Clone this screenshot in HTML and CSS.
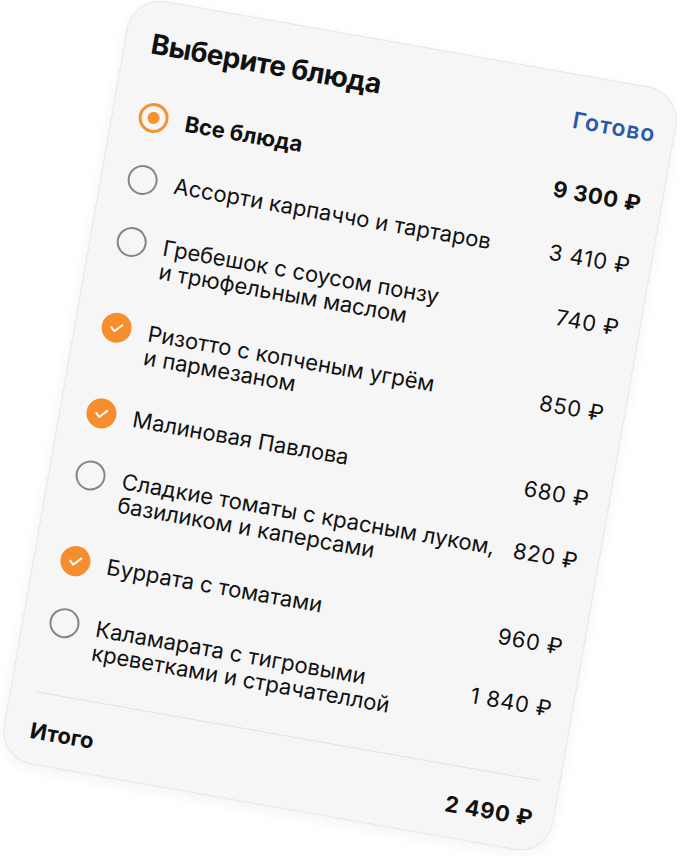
FILE: index.html
```html
<!DOCTYPE html>
<html lang="ru">
<head>
  <meta charset="UTF-8">
  <title>Выберите блюда</title>
  <link rel="stylesheet" href="styles.css">
</head>
<body>

<div class="card">
  <!-- Header -->
  <div class="card-head">
    <h1>Выберите блюда</h1>
    <span class="done">Готово</span>
  </div>

  <!-- Dish list -->
  <ul class="dishes">
    <li class="dish dish-all">
      <span class="mark radio-on"></span>
      <span class="name">Все блюда</span>
      <span class="price">9 300 ₽</span>
    </li>
    <li class="dish">
      <span class="mark"></span>
      <span class="name">Ассорти карпаччо и тартаров</span>
      <span class="price">3 410 ₽</span>
    </li>
    <li class="dish">
      <span class="mark"></span>
      <span class="name">Гребешок с соусом понзу<br>и трюфельным маслом</span>
      <span class="price">740 ₽</span>
    </li>
    <li class="dish">
      <span class="mark checked"><svg viewBox="0 0 24 24"><path d="M7.2 12.4l3.3 3.2 6.3-6.8"/></svg></span>
      <span class="name">Ризотто с копченым угрём<br>и пармезаном</span>
      <span class="price">850 ₽</span>
    </li>
    <li class="dish">
      <span class="mark checked"><svg viewBox="0 0 24 24"><path d="M7.2 12.4l3.3 3.2 6.3-6.8"/></svg></span>
      <span class="name">Малиновая Павлова</span>
      <span class="price">680 ₽</span>
    </li>
    <li class="dish">
      <span class="mark"></span>
      <span class="name">Сладкие томаты с красным луком,<br>базиликом и каперсами</span>
      <span class="price">820 ₽</span>
    </li>
    <li class="dish">
      <span class="mark checked"><svg viewBox="0 0 24 24"><path d="M7.2 12.4l3.3 3.2 6.3-6.8"/></svg></span>
      <span class="name">Буррата с томатами</span>
      <span class="price">960 ₽</span>
    </li>
    <li class="dish">
      <span class="mark"></span>
      <span class="name">Каламарата с тигровыми<br>креветками и страчателлой</span>
      <span class="price">1 840 ₽</span>
    </li>
  </ul>

  <!-- Total -->
  <div class="total">
    <span>Итого</span>
    <span class="price">2 490 ₽</span>
  </div>
</div>

</body>
</html>
```

FILE: styles.css
```css
* {
  box-sizing: border-box;
}
body {
  margin: 0;
  height: 856px;
  padding-bottom: 6px;
  display: flex;
  align-items: center;
  justify-content: center;
  background: #fff;
  font-family: Inter, "Noto Sans", sans-serif;
  color: #111;
  overflow: hidden;
}

.card {
  flex: none;
  width: 558px;
  height: 775px;
  padding: 26px 20px 24px 26px;
  background: #f6f6f7;
  border: 1px solid #e6e6e8;
  border-radius: 34px;
  box-shadow: 0 4px 14px rgba(0, 0, 0, 0.05);
  transform: rotate(10deg);
}

.card-head {
  display: flex;
  justify-content: space-between;
  align-items: baseline;
}
.card-head h1 {
  margin: 0;
  font-size: 28px;
  line-height: 34px;
  font-weight: 700;
  letter-spacing: -0.5px;
}
.done {
  font-size: 23px;
  font-weight: 600;
  letter-spacing: 1px;
  color: #2a5aa6;
  margin-right: -2px;
}

.dishes {
  list-style: none;
  margin: 44px 0 0;
  padding: 0;
  display: flex;
  flex-direction: column;
  gap: 39px;
}
.dish {
  display: grid;
  grid-template-columns: 30px 1fr auto;
  column-gap: 17px;
  align-items: start;
  font-size: 22px;
  line-height: 24px;
}
.dish-all {
  font-weight: 700;
}
.price {
  white-space: nowrap;
  letter-spacing: 0.6px;
}

.mark {
  width: 30px;
  height: 30px;
  margin: -3px 0;
  border-radius: 50%;
  border: 2.5px solid #858585;
  display: flex;
  align-items: center;
  justify-content: center;
}
.radio-on {
  border: 3px solid #f5912f;
}
.radio-on::after {
  content: "";
  width: 12px;
  height: 12px;
  border-radius: 50%;
  background: #f5912f;
}
.checked {
  border: none;
  background: #f68d2e;
}
.checked svg {
  width: 26px;
  height: 26px;
  fill: none;
  stroke: #fff;
  stroke-width: 1.8;
  stroke-linecap: round;
  stroke-linejoin: round;
}

.total {
  margin-top: 36px;
  padding-top: 26px;
  border-top: 1px solid #e2e2e4;
  display: flex;
  justify-content: space-between;
  font-size: 22px;
  line-height: 24px;
  font-weight: 700;
}
```
